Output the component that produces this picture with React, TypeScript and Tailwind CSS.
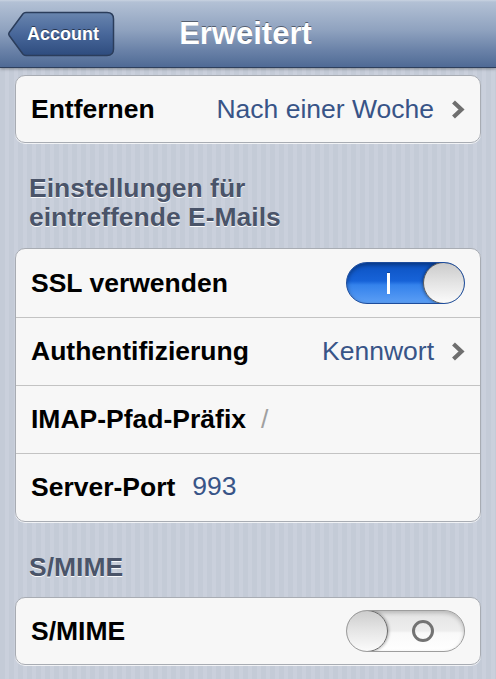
import React from "react";

const font = "font-['Liberation_Sans','Helvetica_Neue',Arial,sans-serif]";

function Chevron() {
  return (
    <svg width="14" height="19" viewBox="0 0 14 19" className="shrink-0">
      <path
        d="M2.5 2 L10.5 9.5 L2.5 17"
        fill="none"
        stroke="#6f6f6f"
        strokeWidth="4.2"
        strokeLinecap="butt"
        strokeLinejoin="miter"
      />
    </svg>
  );
}

function SwitchOn() {
  return (
    <div className="relative h-[42px] w-[119px] shrink-0 overflow-hidden rounded-full border border-[#1d4c9c] bg-[linear-gradient(180deg,#0c52c2_0%,#1763d8_45%,#3482ec_55%,#5b9ef5_100%)] shadow-[inset_0_2px_4px_rgba(0,0,0,0.35)]">
      <div className="absolute left-[40px] top-[10px] h-[21px] w-[3px] bg-white shadow-[0_-1px_0_rgba(0,0,0,0.25)]" />
      <div className="absolute right-[-1px] top-[-1px] h-[42px] w-[42px] rounded-full border border-[#5e5e5e] bg-[linear-gradient(180deg,#cbcbcb_0%,#e4e4e4_50%,#fbfbfb_100%)] shadow-[-1px_0_3px_rgba(0,0,0,0.35)]" />
    </div>
  );
}

function SwitchOff() {
  return (
    <div className="relative h-[42px] w-[119px] shrink-0 overflow-hidden rounded-full border border-[#9d9d9d] bg-[linear-gradient(180deg,#e3e3e3_0%,#eeeeee_50%,#f9f9f9_55%,#ffffff_100%)] shadow-[inset_0_2px_4px_rgba(0,0,0,0.2)]">
      <div className="absolute left-[65px] top-[9px] h-[22px] w-[22px] rounded-full border-[3px] border-[#737373]" />
      <div className="absolute left-[-1px] top-[-1px] h-[42px] w-[42px] rounded-full border border-[#6a6a6a] bg-[linear-gradient(180deg,#cdcdcd_0%,#e6e6e6_50%,#fbfbfb_100%)] shadow-[1px_0_3px_rgba(0,0,0,0.3)]" />
    </div>
  );
}

function Row({
  first,
  single,
  children,
}: {
  first?: boolean;
  single?: boolean;
  children: React.ReactNode;
}) {
  return (
    <div
      className={
        "flex items-center pl-[15px] pr-[15px] " +
        (single ? "h-[66px] " : "h-[68px] ") +
        (first ? "" : "border-t border-[#c3c3c3]")
      }
    >
      {children}
    </div>
  );
}

function Label({ children }: { children: React.ReactNode }) {
  return <span className="text-[26.5px] font-bold leading-none text-black">{children}</span>;
}

function Value({ children }: { children: React.ReactNode }) {
  return <span className="text-[26.5px] leading-none text-[#385487]">{children}</span>;
}

function Group({ children, className = "" }: { children: React.ReactNode; className?: string }) {
  return (
    <div
      className={
        "overflow-hidden rounded-[10px] border border-[#a8acb3] bg-[#f7f7f7] shadow-[0_1px_0_rgba(255,255,255,0.75)] " +
        className
      }
    >
      {children}
    </div>
  );
}

function Header({ children, className = "" }: { children: React.ReactNode; className?: string }) {
  return (
    <div
      className={
        "px-[14px] text-[26.5px] font-bold leading-[29px] text-[#4a5469] [text-shadow:0_1px_0_rgba(255,255,255,0.9)] " +
        className
      }
    >
      {children}
    </div>
  );
}

function BackButton() {
  return (
    <div className="absolute left-[7px] top-[11px] flex h-[46px] w-[108px] items-center pl-[20px]">
      <svg width="108" height="46" viewBox="0 0 108 46" className="absolute left-0 top-0">
        <defs>
          <linearGradient id="backFill" x1="0" y1="0" x2="0" y2="1">
            <stop offset="0" stopColor="#6985ae" />
            <stop offset="0.5" stopColor="#48679a" />
            <stop offset="1" stopColor="#2e4c7e" />
          </linearGradient>
        </defs>
        <path
          d="M19 1.5 H100 Q106.5 1.5 106.5 8 V38 Q106.5 44.5 100 44.5 H19 Q17 44.5 15.8 43 L2.2 24.5 Q1.2 23 2.2 21.5 L15.8 3 Q17 1.5 19 1.5 Z"
          fill="url(#backFill)"
          stroke="#2b3d5b"
          strokeWidth="1.5"
        />
      </svg>
      <span className="relative text-[18px] font-bold leading-none text-white [text-shadow:0_-1px_0_rgba(0,0,0,0.5)]">
        Account
      </span>
    </div>
  );
}

export default function App() {
  return (
    <div
      className={
        "h-[679px] w-[496px] overflow-hidden bg-[repeating-linear-gradient(90deg,#c4cbd7_0px,#c4cbd7_5px,#cad0dc_5px,#cad0dc_9px)] " +
        font
      }
    >
      <div className="relative z-10 flex h-[68px] items-center justify-center border-b border-[#2e3f5c] bg-[linear-gradient(180deg,#c9d3e1_0px,#b3c1d5_2px,#8fa2bf_45%,#6a82a8_75%,#4f6a95_100%)] shadow-[0_1px_3px_rgba(0,0,0,0.35)]">
        <BackButton />
        <span className="pr-[5px] text-[31px] font-bold leading-none text-white [text-shadow:0_-1px_0_rgba(0,0,0,0.45)]">
          Erweitert
        </span>
      </div>

      <div className="px-[15px]">
        <Group className="mt-[7px]">
          <Row first single>
            <Label>Entfernen</Label>
            <div className="ml-auto flex items-center gap-[17px]">
              <Value>Nach einer Woche</Value>
              <Chevron />
            </div>
          </Row>
        </Group>

        <Header className="mt-[31px]">
          Einstellungen für
          <br />
          eintreffende E-Mails
        </Header>

        <Group className="mt-[16px]">
          <Row first>
            <Label>SSL verwenden</Label>
            <div className="ml-auto">
              <SwitchOn />
            </div>
          </Row>
          <Row>
            <Label>Authentifizierung</Label>
            <div className="ml-auto flex items-center gap-[17px]">
              <Value>Kennwort</Value>
              <Chevron />
            </div>
          </Row>
          <Row>
            <Label>IMAP-Pfad-Präfix</Label>
            <span className="ml-[15px] text-[26.5px] leading-none text-[#a0a0a0]">/</span>
          </Row>
          <Row>
            <Label>Server-Port</Label>
            <span className="ml-[17px]">
              <Value>993</Value>
            </span>
          </Row>
        </Group>

        <Header className="mt-[31px]">S/MIME</Header>

        <Group className="mt-[15px]">
          <Row first single>
            <Label>S/MIME</Label>
            <div className="ml-auto">
              <SwitchOff />
            </div>
          </Row>
        </Group>
      </div>
    </div>
  );
}
